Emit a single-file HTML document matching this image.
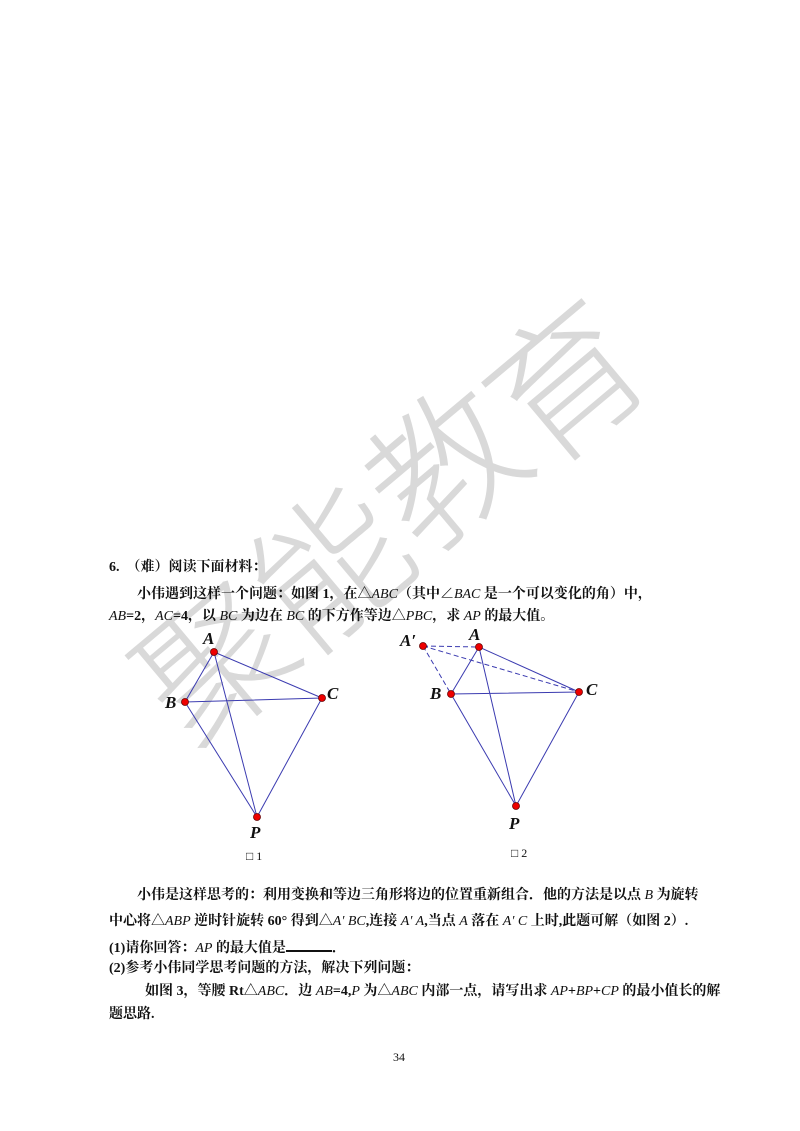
<!DOCTYPE html>
<html><head><meta charset="utf-8"><style>
body{margin:0;background:#fff;}
.pg{position:relative;width:800px;height:1131px;overflow:hidden;background:#fff;font-family:"Liberation Serif","Noto Serif CJK SC",serif;color:#111;}
.t{position:absolute;font-size:14px;font-weight:bold;white-space:nowrap;line-height:16px;}
i{font-weight:normal;}
.wm{position:absolute;font-family:"Noto Sans CJK SC",sans-serif;font-weight:300;color:#d9d9d9;font-size:150px;line-height:150px;}
</style></head><body><div class="pg">
<div class="wm" style="left:135px;top:580px;transform:rotate(-40deg)">聚</div>
<div class="wm" style="left:250px;top:485px;transform:rotate(-40deg)">能</div>
<div class="wm" style="left:365px;top:385px;transform:rotate(-40deg)">教</div>
<div class="wm" style="left:485px;top:300px;transform:rotate(-40deg)">育</div>

<div class="t" style="left:109px;top:560px">6.&nbsp; （难）阅读下面材料：</div>
<div class="t" style="left:137px;top:587px">小伟遇到这样一个问题：如图 1，在△<i>ABC</i>（其中∠<i>BAC</i> 是一个可以变化的角）中，</div>
<div class="t" style="left:109px;top:609px"><i>AB</i>=2，<i>AC</i>=4，以 <i>BC</i> 为边在 <i>BC</i> 的下方作等边△<i>PBC</i>，求 <i>AP</i> 的最大值。</div>

<svg style="position:absolute;left:0;top:0" width="800" height="1131">
<g stroke="#3b3bb0" stroke-width="1" fill="none">
<path d="M214 652L185 702L322 698ZM214 652L257 817M185 702L257 817L322 698"/>
<path d="M479 647L451 694L579 692ZM479 647L516 806M451 694L516 806L579 692"/>
<path d="M423 646L479 647M423 646L579 692M423 646L451 694" stroke-dasharray="5,3"/>
</g>
<g fill="#e00" stroke="#600" stroke-width="0.8">
<circle cx="214" cy="652" r="3.5"/><circle cx="185" cy="702" r="3.5"/><circle cx="322" cy="698" r="3.5"/><circle cx="257" cy="817" r="3.5"/>
<circle cx="423" cy="646" r="3.5"/><circle cx="479" cy="647" r="3.5"/><circle cx="451" cy="694" r="3.5"/><circle cx="579" cy="692" r="3.5"/><circle cx="516" cy="806" r="3.5"/>
</g>
<g font-family="Liberation Serif" font-style="italic" font-weight="bold" font-size="17" fill="#111">
<text x="203" y="644">A</text><text x="165" y="708">B</text><text x="327" y="699">C</text><text x="250" y="838">P</text>
<text x="400" y="646">A′</text><text x="469" y="640">A</text><text x="430" y="699">B</text><text x="586" y="695">C</text><text x="509" y="829">P</text>
</g>
<g font-family="Liberation Serif" font-size="12" fill="#111">
<text x="246" y="860">□ 1</text><text x="511" y="857">□ 2</text>
</g>
</svg>

<div class="t" style="left:137px;top:888px">小伟是这样思考的：利用变换和等边三角形将边的位置重新组合．他的方法是以点 <i>B</i> 为旋转</div>
<div class="t" style="left:109px;top:914px">中心将△<i>ABP</i> 逆时针旋转 60° 得到△<i>A′ BC</i>,连接 <i>A′ A</i>,当点 <i>A</i> 落在 <i>A′ C</i> 上时,此题可解（如图 2）.</div>
<div class="t" style="left:109px;top:938px">(1)请你回答：<i>AP</i> 的最大值是<span style="display:inline-block;width:46px;border-bottom:2px solid #111;height:12px"></span>．</div>
<div class="t" style="left:109px;top:961px">(2)参考小伟同学思考问题的方法，解决下列问题：</div>
<div class="t" style="left:145px;top:984px">如图 3，等腰 Rt△<i>ABC</i>．边 <i>AB</i>=4,<i>P</i> 为△<i>ABC</i> 内部一点，请写出求 <i>AP</i>+<i>BP</i>+<i>CP</i> 的最小值长的解</div>
<div class="t" style="left:109px;top:1007px">题思路.</div>
<div style="position:absolute;left:393px;top:1050px;font-size:12px;font-family:'Liberation Serif',serif">34</div>
</div></body></html>
